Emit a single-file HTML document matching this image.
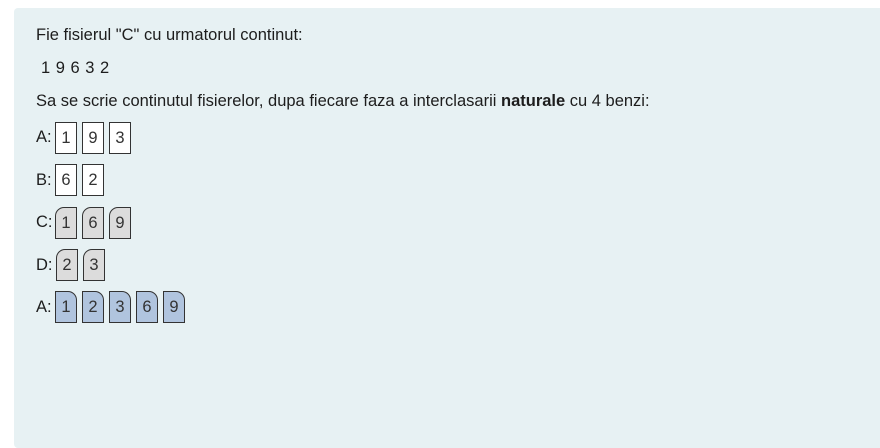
<!DOCTYPE html>
<html><head><style>
body{margin:0;background:#fff;font-family:"Liberation Sans",sans-serif;color:#1d1d1d;}
.panel{position:absolute;left:14px;top:8px;width:880px;height:440px;background:#e7f1f3;border-radius:4px;}
.t{position:absolute;left:36px;font-size:16.5px;white-space:nowrap;}
.lab{position:absolute;left:36px;font-size:16.5px;}
.b{position:absolute;width:20px;height:30px;border:1px solid #333;background:#fff;font-size:16.5px;text-align:center;line-height:30px;color:#333;box-sizing:content-box;}
.g{background:#dcdcdc;border-top-left-radius:9px;}
.bl{background:#b0c4de;border-top-right-radius:9px;}
</style></head><body>
<div class="panel"></div>
<div class="t" style="top:26px">Fie fisierul "C" cu urmatorul continut:</div>
<div class="t" style="top:59px;left:41px;letter-spacing:0.5px">1 9 6 3 2</div>
<div class="t" style="top:92px">Sa se scrie continutul fisierelor, dupa fiecare faza a interclasarii <b>naturale</b> cu 4 benzi:</div>
<div class="lab" style="top:128px">A:</div>
<div class="b" style="left:55px;top:122px">1</div><div class="b" style="left:82px;top:122px">9</div><div class="b" style="left:109px;top:122px">3</div>
<div class="lab" style="top:171px">B:</div>
<div class="b" style="left:55px;top:164px">6</div><div class="b" style="left:82px;top:164px">2</div>
<div class="lab" style="top:213px">C:</div>
<div class="b g" style="left:55px;top:207px">1</div><div class="b g" style="left:82px;top:207px">6</div><div class="b g" style="left:109px;top:207px">9</div>
<div class="lab" style="top:256px">D:</div>
<div class="b g" style="left:56px;top:249px">2</div><div class="b g" style="left:83px;top:249px">3</div>
<div class="lab" style="top:298px">A:</div>
<div class="b bl" style="left:55px;top:291px">1</div><div class="b bl" style="left:82px;top:291px">2</div><div class="b bl" style="left:109px;top:291px">3</div><div class="b bl" style="left:136px;top:291px">6</div><div class="b bl" style="left:163px;top:291px">9</div>
</body></html>
